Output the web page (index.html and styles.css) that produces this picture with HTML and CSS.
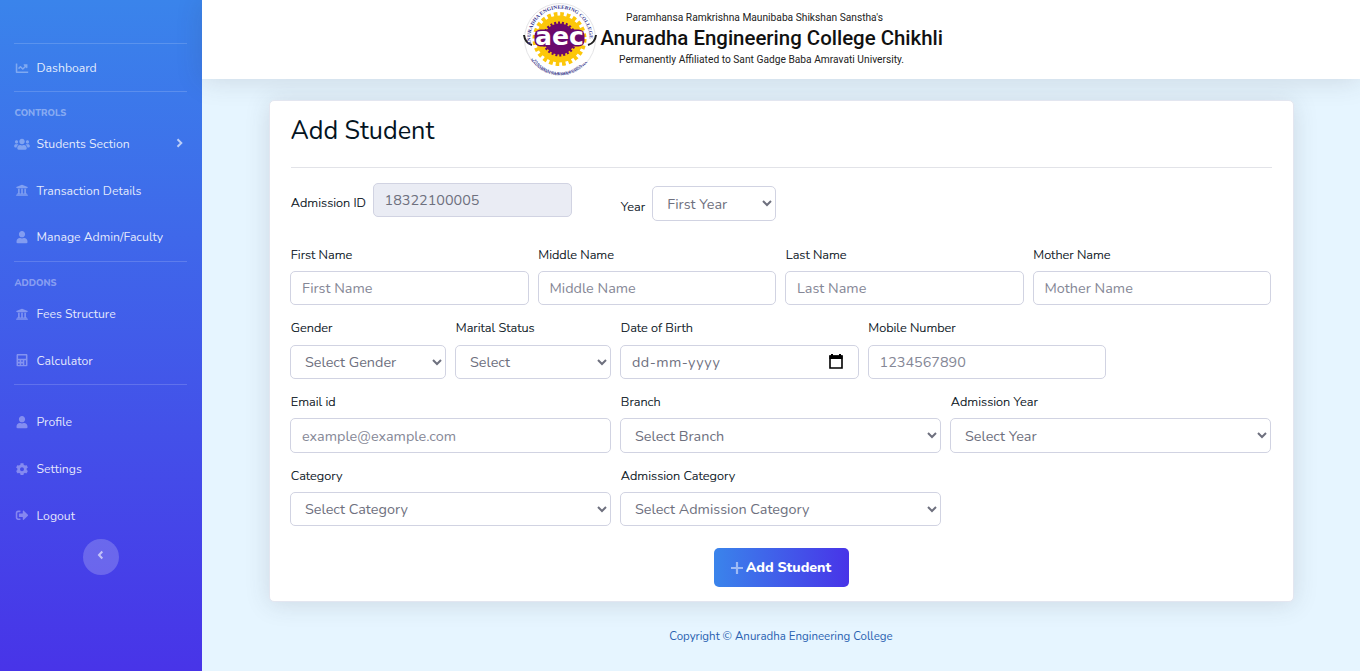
FILE: index.html
```html
<!DOCTYPE html>
<html lang="en">
<head>
<meta charset="utf-8">
<title>Add Student</title>
<link rel="stylesheet" href="styles.css">
</head>
<body>
<svg class="sprite" aria-hidden="true">
  <symbol id="chart" viewBox="0 0 512 512"><path d="M496 384H64V80c0-8.84-7.16-16-16-16H16C7.16 64 0 71.16 0 80v336c0 17.67 14.33 32 32 32h464c8.84 0 16-7.16 16-16v-32c0-8.84-7.16-16-16-16zM464 96H345.94c-21.38 0-32.09 25.85-16.97 40.97l32.4 32.4L288 242.75l-73.37-73.37c-12.5-12.5-32.76-12.5-45.25 0l-68.69 68.69c-6.25 6.25-6.25 16.38 0 22.63l22.62 22.62c6.25 6.25 16.38 6.25 22.63 0L192 237.25l73.37 73.37c12.5 12.5 32.76 12.5 45.25 0l96-96 32.4 32.4c15.12 15.12 40.97 4.41 40.97-16.97V112c.01-8.84-7.15-16-15.99-16z"/></symbol>
  <symbol id="users" viewBox="0 0 640 512"><path d="M96 224c35.3 0 64-28.7 64-64s-28.7-64-64-64-64 28.7-64 64 28.7 64 64 64zm448 0c35.3 0 64-28.7 64-64s-28.7-64-64-64-64 28.7-64 64 28.7 64 64 64zm32 32h-64c-17.6 0-33.5 7.1-45.1 18.6 40.3 22.1 68.9 62 75.1 109.4h66c17.7 0 32-14.3 32-32v-32c0-35.3-28.7-64-64-64zm-256 0c61.9 0 112-50.1 112-112S381.9 32 320 32 208 82.1 208 144s50.1 112 112 112zm76.8 32h-8.3c-20.8 10-43.9 16-68.5 16s-47.6-6-68.5-16h-8.3C179.6 288 128 339.6 128 403.2V432c0 26.5 21.5 48 48 48h288c26.5 0 48-21.5 48-48v-28.8c0-63.6-51.6-115.2-115.2-115.2zm-223.7-13.4C161.5 263.1 145.6 256 128 256H64c-35.3 0-64 28.7-64 64v32c0 17.7 14.3 32 32 32h65.9c6.3-47.4 34.9-87.3 75.2-109.4z"/></symbol>
  <symbol id="bank" viewBox="0 0 512 512"><path d="M496 128v16a8 8 0 0 1-8 8h-24v12c0 6.627-5.373 12-12 12H60c-6.627 0-12-5.373-12-12v-12H24a8 8 0 0 1-8-8v-16a8 8 0 0 1 4.941-7.392l232-88a7.996 7.996 0 0 1 6.118 0l232 88A8 8 0 0 1 496 128zm-24 304H40c-13.255 0-24 10.745-24 24v16a8 8 0 0 0 8 8h464a8 8 0 0 0 8-8v-16c0-13.255-10.745-24-24-24zM96 192v192H60c-6.627 0-12 5.373-12 12v20h416v-20c0-6.627-5.373-12-12-12h-36V192h-64v192h-64V192h-64v192h-64V192H96z"/></symbol>
  <symbol id="user" viewBox="0 0 448 512"><path d="M224 256c70.7 0 128-57.3 128-128S294.7 0 224 0 96 57.3 96 128s57.3 128 128 128zm89.6 32h-16.7c-22.2 10.2-46.9 16-72.9 16s-50.6-5.8-72.9-16h-16.7C60.2 288 0 348.2 0 422.4V464c0 26.5 21.5 48 48 48h352c26.5 0 48-21.5 48-48v-41.6c0-74.2-60.2-134.4-134.4-134.4z"/></symbol>
  <symbol id="calc" viewBox="0 0 448 512"><path fill-rule="evenodd" d="M400 0H48C22 0 0 22 0 48v416c0 26 22 48 48 48h352c26 0 48-22 48-48V48c0-26-22-48-48-48zM64 64h320v128H64zM64 256h64v64H64zM192 256h64v64h-64zM320 256h64v192h-64zM64 384h64v64H64zM192 384h64v64h-64z"/></symbol>
  <symbol id="cog" viewBox="0 0 512 512"><path d="M487.4 315.7l-42.6-24.6c4.3-23.2 4.3-47 0-70.2l42.6-24.6c4.9-2.8 7.1-8.6 5.5-14-11.1-35.6-30-67.8-54.7-94.6-3.8-4.1-10-5.1-14.8-2.3L380.8 110c-17.9-15.4-38.5-27.3-60.8-35.1V25.8c0-5.6-3.9-10.5-9.4-11.7-36.7-8.2-74.3-7.8-109.2 0-5.5 1.2-9.4 6.1-9.4 11.7V75c-22.2 7.9-42.8 19.8-60.8 35.1L88.7 85.5c-4.9-2.8-11-1.9-14.8 2.3-24.7 26.7-43.6 58.9-54.7 94.6-1.7 5.4.6 11.2 5.5 14L67.3 221c-4.3 23.2-4.3 47 0 70.2l-42.6 24.6c-4.9 2.8-7.1 8.6-5.5 14 11.1 35.6 30 67.8 54.7 94.6 3.8 4.1 10 5.1 14.8 2.3l42.6-24.6c17.9 15.4 38.5 27.3 60.8 35.1v49.2c0 5.6 3.9 10.5 9.4 11.7 36.7 8.2 74.3 7.8 109.2 0 5.5-1.2 9.4-6.1 9.4-11.7v-49.2c22.2-7.9 42.8-19.8 60.8-35.1l42.6 24.6c4.9 2.8 11 1.9 14.8-2.3 24.7-26.7 43.6-58.9 54.7-94.6 1.5-5.5-.7-11.3-5.6-14.1zM256 336c-44.1 0-80-35.9-80-80s35.9-80 80-80 80 35.9 80 80-35.9 80-80 80z"/></symbol>
  <symbol id="logout" viewBox="0 0 512 512"><path d="M497 273L329 441c-15 15-41 4.5-41-17v-96H152c-13.3 0-24-10.7-24-24v-96c0-13.3 10.7-24 24-24h136V88c0-21.4 25.9-32 41-17l168 168c9.3 9.4 9.3 24.6 0 34zM192 436v-40c0-6.6-5.4-12-12-12H96c-17.7 0-32-14.3-32-32V160c0-17.7 14.3-32 32-32h84c6.6 0 12-5.4 12-12V76c0-6.6-5.4-12-12-12H96c-53 0-96 43-96 96v192c0 53 43 96 96 96h84c6.6 0 12-5.4 12-12z"/></symbol>
</svg>
<div class="page">
  <nav class="sidebar">
    <hr>
    <a class="item"><svg><use href="#chart"/></svg><span>Dashboard</span></a>
    <hr>
    <div class="heading">CONTROLS</div>
    <a class="item"><svg><use href="#users"/></svg><span>Students Section</span>
      <svg class="more" viewBox="0 0 7 10"><path d="M1.500 1.200 5.300 5 1.500 8.800"/></svg></a>
    <a class="item"><svg><use href="#bank"/></svg><span>Transaction Details</span></a>
    <a class="item"><svg><use href="#user"/></svg><span>Manage Admin/Faculty</span></a>
    <hr class="raised">
    <div class="heading">ADDONS</div>
    <a class="item"><svg><use href="#bank"/></svg><span>Fees Structure</span></a>
    <a class="item"><svg><use href="#calc"/></svg><span>Calculator</span></a>
    <hr class="last">
    <a class="item"><svg><use href="#user"/></svg><span>Profile</span></a>
    <a class="item"><svg><use href="#cog"/></svg><span>Settings</span></a>
    <a class="item"><svg><use href="#logout"/></svg><span>Logout</span></a>
    <button class="toggle" aria-label="Collapse"><svg viewBox="0 0 7 10"><path d="M5.300 1.500 2 5 5.300 8.500"/></svg></button>
  </nav>
  <div class="main">
    <header class="topbar">
      <svg class="banner" width="424" height="74" viewBox="0 0 424 74">
        <defs>
          <path id="arcTop" d="M8.300 42A29.500 29.500 0 1 1 65.700 42"/>
          <path id="arcLow" d="M7 48A31 31 0 0 0 67 48"/>
          <path id="arcLow2" d="M4 49A35 35 0 0 0 70 49"/>
        </defs>
        <circle cx="37" cy="36" r="35.500" fill="#fff" stroke="#e4e4e6"/>
        <path d="M1 32Q2 40 9 42M73 32Q72 40 65 42" fill="none" stroke="#222" stroke-width="2"/>
        <circle cx="36.500" cy="36" r="23.500" fill="#fcc70a"/>
        <circle cx="36.500" cy="36" r="24.500" fill="none" stroke="#fcc70a" stroke-width="5" stroke-dasharray="3.600 2.814"/>
        <circle cx="36.500" cy="36" r="15.500" fill="#6b096c"/>
        <circle cx="36.500" cy="36" r="16" fill="none" stroke="#6b096c" stroke-width="3" stroke-dasharray="2 1.866"/>
        <text class="ring"><textPath href="#arcTop" textLength="100" lengthAdjust="spacingAndGlyphs">ANURADHA ENGINEERING COLLEGE</textPath></text>
        <text class="ring small"><textPath href="#arcLow" startOffset="10" textLength="54" lengthAdjust="spacingAndGlyphs">PARAMHANSA RAMKRISHNA</textPath></text>
        <text class="ring small"><textPath href="#arcLow2" startOffset="8" textLength="66" lengthAdjust="spacingAndGlyphs">MAUNIBABA SHIKSHAN SANSTHA</textPath></text>
        <rect x="11.500" y="26.500" width="50" height="17" rx="6" fill="#6b096c"/>
        <text class="aec" x="12" y="42" textLength="49" lengthAdjust="spacingAndGlyphs">aec</text>
        <text class="line" x="103" y="18" textLength="257" lengthAdjust="spacingAndGlyphs">Paramhansa Ramkrishna Maunibaba Shikshan Sanstha's</text>
        <text class="name" x="77.500" y="42" textLength="342.500" lengthAdjust="spacingAndGlyphs">Anuradha Engineering College Chikhli</text>
        <text class="line" x="96" y="59.500" textLength="285" lengthAdjust="spacingAndGlyphs">Permanently Affiliated to Sant Gadge Baba Amravati University.</text>
      </svg>
    </header>
    <section class="card">
      <h1>Add Student</h1>
      <form>
        <div class="inline"><label>Admission ID</label><input class="control id" value="18322100005" disabled></div>
        <div class="inline year"><label>Year</label><select class="control"><option>First Year</option></select></div>
        <div class="field three"><label>First Name</label><input class="control" placeholder="First Name"></div>
        <div class="field three"><label>Middle Name</label><input class="control" placeholder="Middle Name"></div>
        <div class="field three"><label>Last Name</label><input class="control" placeholder="Last Name"></div>
        <div class="field three"><label>Mother Name</label><input class="control" placeholder="Mother Name"></div>
        <div class="field two"><label>Gender</label><select class="control"><option>Select Gender</option></select></div>
        <div class="field two"><label>Marital Status</label><select class="control"><option>Select</option></select></div>
        <div class="field three"><label>Date of Birth</label><div class="control date"><span>dd-mm-yyyy</span>
          <svg width="14" height="15" viewBox="0 0 14 15"><path d="M1 2h12v12H1z" fill="none" stroke="#000" stroke-width="1.600"/><path d="M.5 1.500h13V5H.5zM2 0h2v2H2zM10 0h2v2h-2z"/></svg></div></div>
        <div class="field three"><label>Mobile Number</label><input class="control" placeholder="1234567890"></div>
        <div class="field four first"><label>Email id</label><input class="control" placeholder="example@example.com"></div>
        <div class="field four"><label>Branch</label><select class="control"><option>Select Branch</option></select></div>
        <div class="field four"><label>Admission Year</label><select class="control"><option>Select Year</option></select></div>
        <div class="field four"><label>Category</label><select class="control"><option>Select Category</option></select></div>
        <div class="field four"><label>Admission Category</label><select class="control"><option>Select Admission Category</option></select></div>
      </form>
      <button class="submit"><svg width="12" height="12" viewBox="0 0 12 12"><path d="M6 0v12M0 6h12"/></svg><span>Add Student</span></button>
    </section>
    <footer>Copyright © Anuradha Engineering College</footer>
  </div>
</div>
</body>
</html>
```
FILE: styles.css
```css
* { box-sizing: border-box; }
body { margin: 0; font-family: Nunito, Lato, sans-serif; font-size: 14.4px; color: #04141f; background: #e6f5ff; }
.sprite { display: none; }
.page { display: flex; height: 671px; overflow: hidden; }

.sidebar { width: 202px; flex: none; padding-top: 43px; background: linear-gradient(180deg, #3a84eb 0%, #4834e8 100%); display: flex; flex-direction: column; }
.sidebar hr { width: 173px; height: 1px; margin: 0 0 0 14px; border: 0; background: rgba(255,255,255,.16); flex: none; }
.sidebar hr.raised { margin-top: .4px; }
.sidebar hr.last { margin-bottom: 14px; }
.item { height: 46.7px; flex: none; padding: 1px 14px 0 14px; display: flex; align-items: center; color: rgba(255,255,255,.87); font-size: 12.24px; }
.item > svg { width: 16px; height: 12.5px; margin-right: 6.5px; fill: rgba(255,255,255,.35); flex: none; }
.item svg.more { width: 7px; height: 10px; margin: 0 5px 2px auto; fill: none; stroke: rgba(255,255,255,.65); stroke-width: 2; }
.heading { height: 28.5px; flex: none; padding: 14px 14.5px 0; font-size: 9.36px; line-height: 14px; font-weight: 800; color: rgba(255,255,255,.4); }
.toggle { width: 36px; height: 36px; flex: none; align-self: center; border: 0; border-radius: 50%; background: rgba(255,255,255,.2); padding: 0 1px 2px 0; }
.toggle svg { width: 7px; height: 10px; fill: none; stroke: rgba(255,255,255,.6); stroke-width: 2; }

.main { flex: 1; display: flex; flex-direction: column; }
.topbar { height: 79px; flex: none; background: #fff; box-shadow: 0 2px 25px rgba(58,59,69,.15); padding: 3px 0 0 321px; }
.banner { display: block; font-family: Roboto, sans-serif; }
.line { font-size: 11px; fill: #222; }
.name { font-size: 21px; font-weight: 500; fill: #111; }
.ring { font-family: "Liberation Serif", serif; font-weight: 700; font-size: 5px; fill: #35358e; }
.ring.small { font-size: 3px; }
.aec { font-family: "DejaVu Sans", sans-serif; font-weight: 700; font-size: 24px; fill: #fff; stroke: #6b096c; stroke-width: 1.5; paint-order: stroke; }

.card { width: 1025.5px; height: 501.5px; margin: 21px 0 0 66.5px; padding: 0 21.5px 0 21px; background: #fff; border: 1px solid #e3e6f0; border-radius: 5px; box-shadow: 0 2px 25px rgba(58,59,69,.15); display: flex; flex-direction: column; }
h1 { width: 981px; height: 67px; flex: none; margin: 0; padding-top: 14px; border-bottom: 1px solid #e2e3e8; font-size: 25.2px; line-height: 32px; font-weight: 400; }
form { width: 981px; flex: none; margin: 15px 0 0 -.5px; display: grid; grid-template-columns: repeat(12, 1fr); column-gap: 9px; grid-template-rows: 61.5px repeat(4, 73.7px); }
.two { grid-column: span 2; }
.three { grid-column: span 3; }
.four { grid-column: span 4; }
.first { grid-column: 1 / span 4; }
.inline { grid-column: span 4; display: flex; align-items: flex-start; gap: 7px; }
.inline label { padding-top: 11px; }
.inline .id { width: 199px; height: 34px; padding-left: 10.5px; }
.inline.year { grid-column: span 8; padding-top: 3px; }
.year label { padding-top: 12px; }
.year .control { width: 124px; height: 35px; }
.field { display: flex; flex-direction: column; min-width: 0; }
label { font-size: 12.8px; font-weight: 300; line-height: 19px; padding-left: .8px; white-space: nowrap; color: #000b14; -webkit-text-stroke: .15px #000b14; }
.field label { height: 26.5px; padding-top: 1.3px; }
.control { width: 100%; height: 34.3px; border: 1px solid #d1d3e2; border-radius: 5px; padding: 0 11px; background: #fff; color: #6e707e; font: 400 14.4px Nunito, Lato, sans-serif; outline: 0; }
select.control { padding: 0 10px; }
.control:disabled { background: #eaecf4; }
.control::placeholder { color: #858796; }
.date { display: flex; align-items: center; justify-content: space-between; padding-right: 15px; letter-spacing: .45px; }
.submit { width: 135px; height: 39px; flex: none; margin: 9px auto 0; border: 0; border-radius: 5px; background: linear-gradient(90deg, #3a84eb, #4834e8); color: #fff; font: 800 14.2px Nunito, Lato, sans-serif; display: flex; align-items: center; justify-content: center; gap: 3px; }
.submit path { stroke: rgba(255,255,255,.5); stroke-width: 2.2; }
footer { margin-top: 26.5px; text-align: center; font-size: 11.5px; line-height: 16px; color: #2860b0; }
```
